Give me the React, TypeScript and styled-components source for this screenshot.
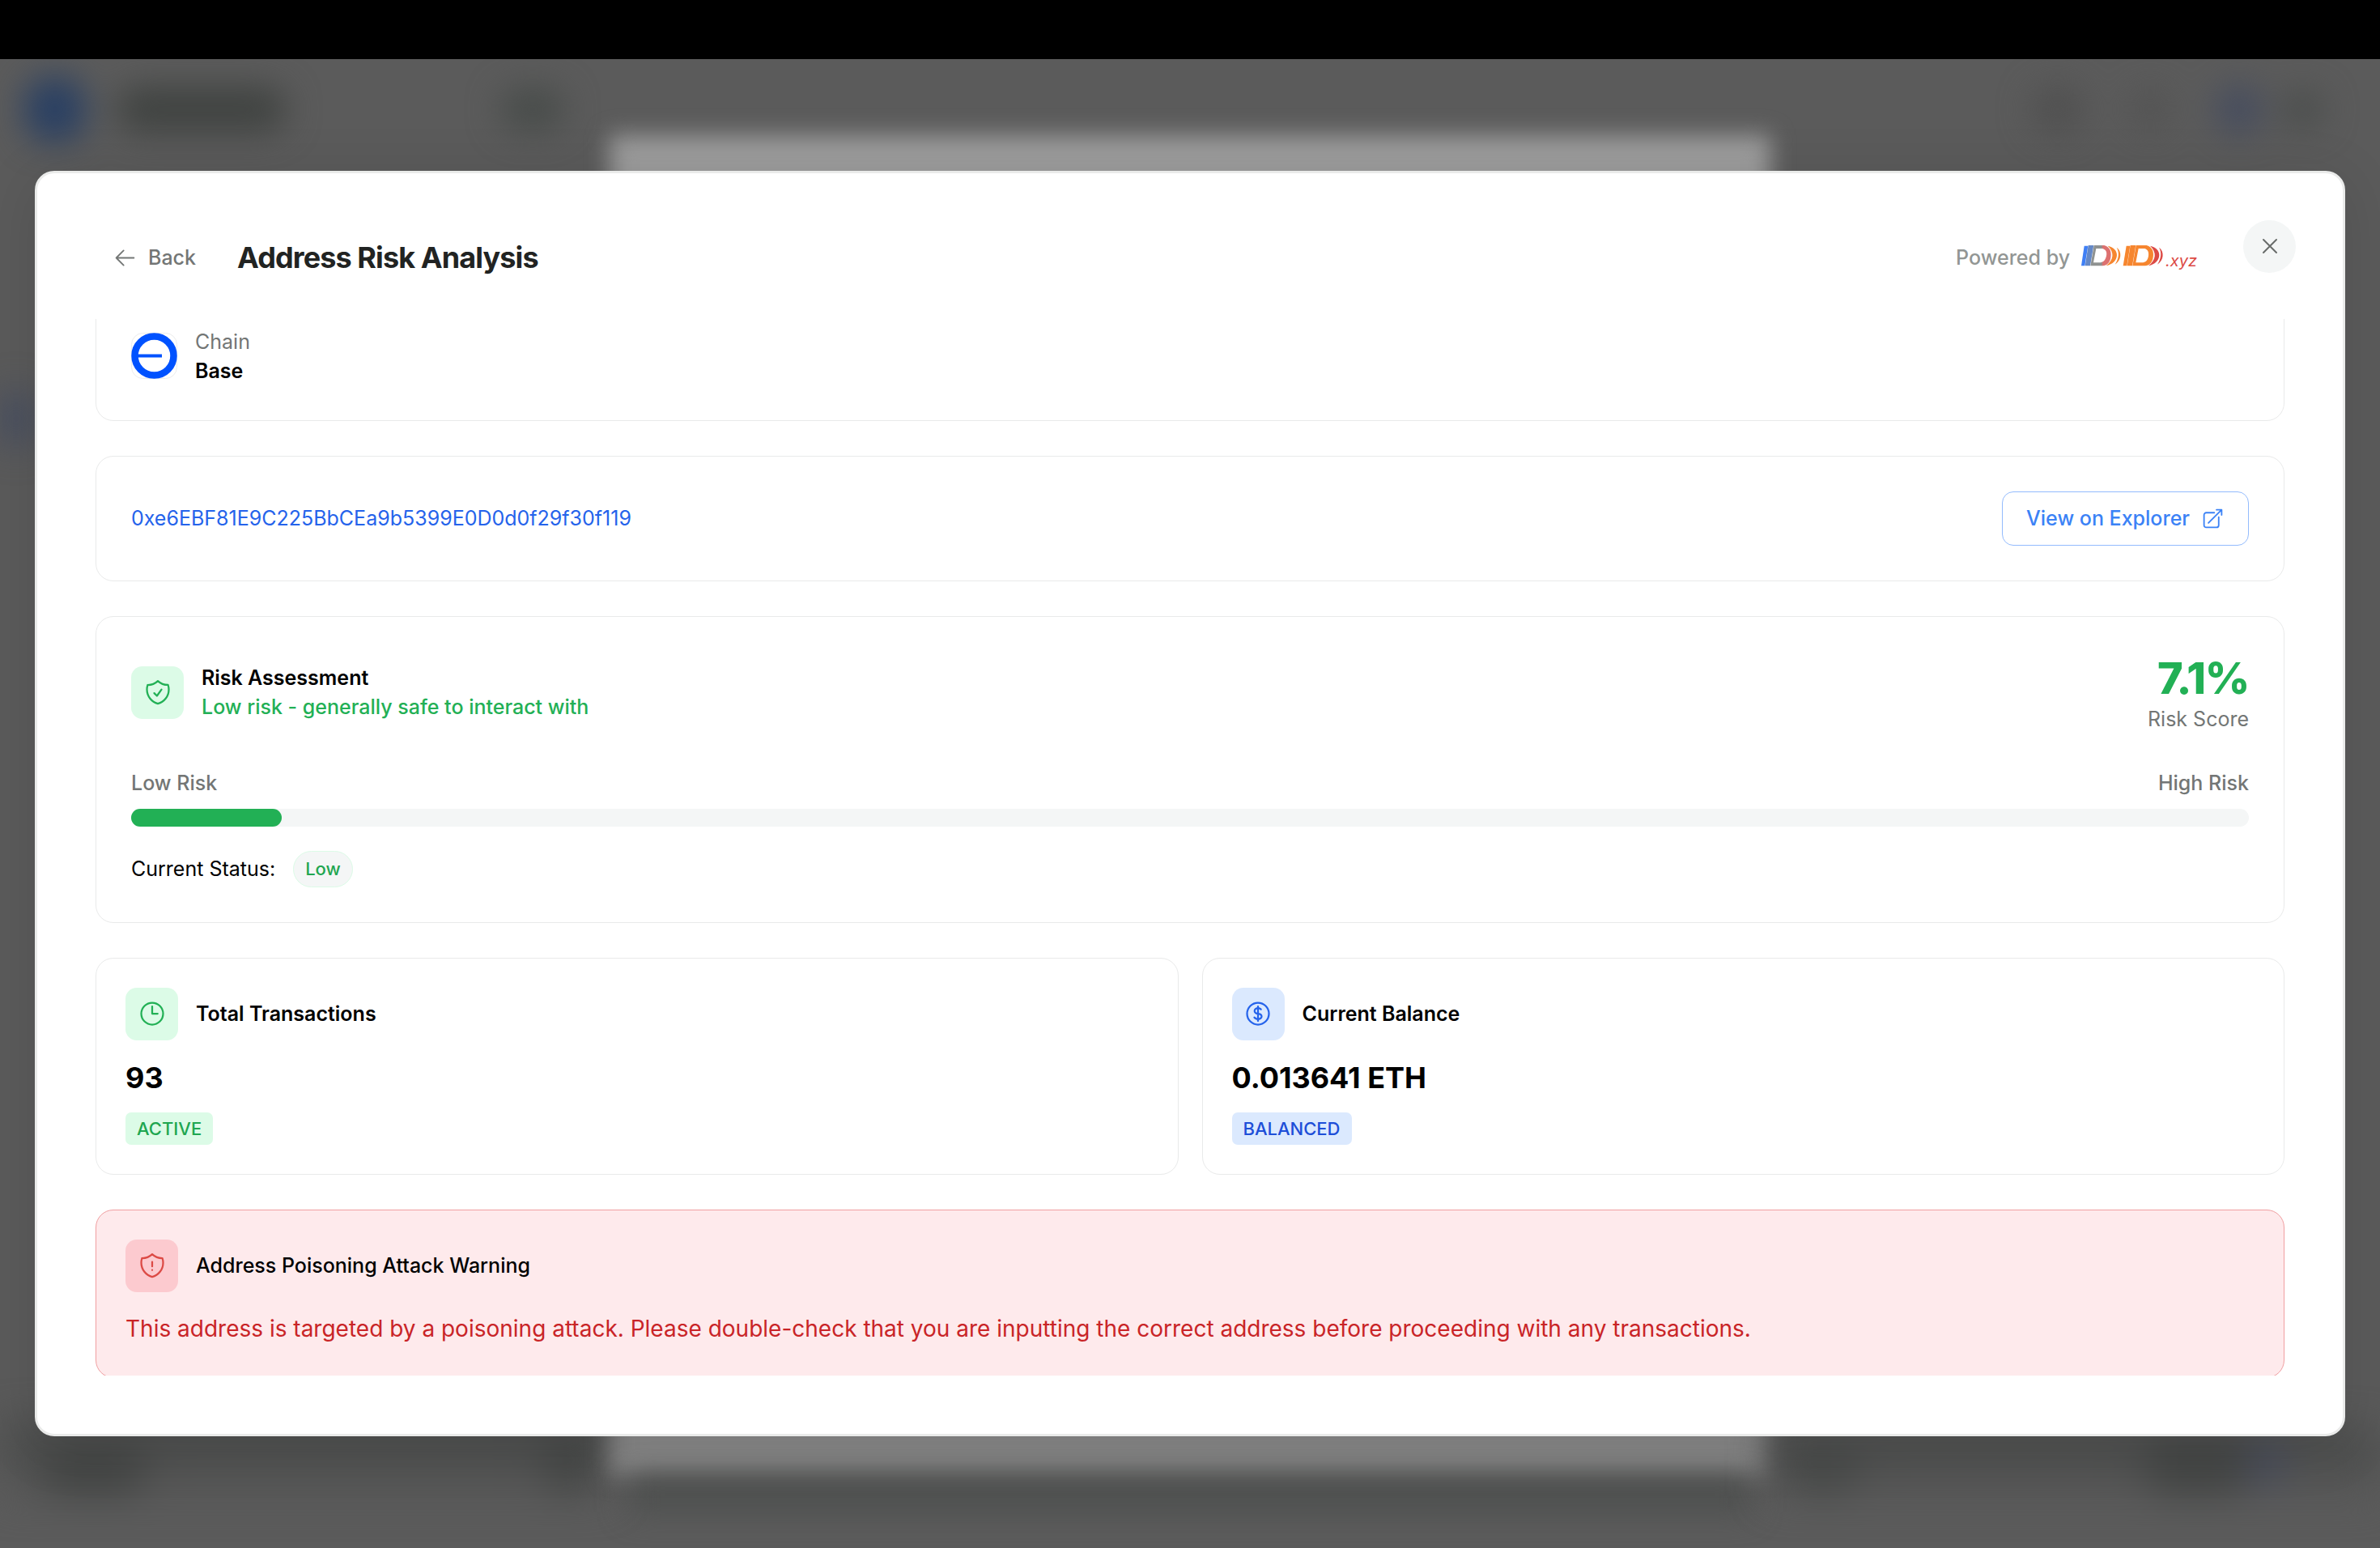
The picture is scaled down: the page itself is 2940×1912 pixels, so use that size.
import React, { useLayoutEffect, useRef } from 'react';
import styled, { createGlobalStyle } from 'styled-components';
import {
  HiOutlineArrowLeft,
  HiOutlineArrowTopRightOnSquare,
  HiOutlineClock,
  HiOutlineCurrencyDollar,
  HiOutlineShieldCheck,
  HiOutlineShieldExclamation,
  HiOutlineXMark,
} from 'react-icons/hi2';

const GlobalStyle = createGlobalStyle`
  *, *::before, *::after { box-sizing: border-box; }
  body {
    margin: 0;
    background: #000;
    font-family: Inter, "Liberation Sans", sans-serif;
    font-size: 25px;
    line-height: 36px;
    color: #000;
  }
  h1, h2, h3, p { margin: 0; font: inherit; }
  button { font: inherit; cursor: pointer; }
  a { text-decoration: none; }
`;

type Tone = 'green' | 'blue' | 'red';

const tones: Record<Tone, { tile: string; ink: string; label: string }> = {
  green: { tile: '#dcfbe7', ink: '#22b055', label: '#1ea650' },
  blue: { tile: '#dbe9fe', ink: '#2563eb', label: '#1d4ed8' },
  red: { tile: '#fccacf', ink: '#dc4a45', label: '#c92427' },
};

const Page = styled.div`
  display: flex;
  flex-direction: column;
  height: 100vh;
`;

const TopStrip = styled.div`
  flex: none;
  height: 73px;
  background: #000;
`;

const Stage = styled.div`
  position: relative;
  flex: 1;
  min-height: 0;
  display: flex;
  align-items: center;
  padding: 0 43px;
  overflow: hidden;
  background: #5b5b5b;
`;

/* The dimmed, blurred application behind the dialog */
const Behind = styled.div`
  position: absolute;
  inset: 0;
  display: flex;
  flex-direction: column;
`;

const BehindHeader = styled.div`
  display: flex;
  align-items: center;
  justify-content: space-between;
  height: 94px;
  padding: 30px 70px 0 30px;
  filter: blur(20px);
`;

const BehindGroup = styled.div<{ $gap: number }>`
  display: flex;
  align-items: center;
  gap: ${(p) => p.$gap}px;
`;

const Smudge = styled.span<{ $w: number; $h: number; $color: string }>`
  flex: none;
  width: ${(p) => p.$w}px;
  height: ${(p) => p.$h}px;
  border-radius: 32px;
  background: ${(p) => p.$color};
`;

const BehindBody = styled.div`
  flex: 1;
  display: grid;
  grid-template-columns: 1fr 1434px 1fr;
  min-height: 0;
`;

const BehindSide = styled.div`
  display: flex;
  flex-direction: column;
  justify-content: space-between;
  padding: 320px 0 64px;
  filter: blur(24px);
`;

const BehindRow = styled.div<{ $end?: boolean }>`
  display: flex;
  align-items: flex-end;
  justify-content: space-between;
  padding: ${(p) => (p.$end ? '0 120px 0 20px' : '0 20px 0 50px')};
  background: linear-gradient(#484a49, #585858);
`;

const BehindPanel = styled.div`
  display: flex;
  flex-direction: column;
  padding-bottom: 44px;
`;

const BehindSheet = styled.div`
  flex: 1;
  background: linear-gradient(#9c9c9c, #868686);
  filter: blur(14px);
`;

const BehindFooter = styled.div`
  height: 44px;
  margin: 0 24px;
  background: #4e504f;
  filter: blur(18px);
`;

const Dialog = styled.section`
  position: relative;
  flex: 1;
  min-width: 0;
  height: 85%;
  display: flex;
  flex-direction: column;
  gap: 43px;
  padding: 72px;
  border: 3px solid #eaebea;
  border-radius: 24px;
  background: #fff;
  box-shadow: 0 12px 72px rgba(0, 0, 0, 0.12);
`;

const CloseButton = styled.button`
  position: absolute;
  top: 58px;
  right: 58px;
  display: grid;
  place-items: center;
  width: 65px;
  height: 65px;
  padding: 0;
  border: 0;
  border-radius: 50%;
  background: #f4f6f6;
  color: #686c6a;
`;

const Header = styled.header`
  flex: none;
  display: flex;
  align-items: center;
  gap: 29px;
  height: 65px;
  padding-right: 108px;
`;

const BackButton = styled.button`
  display: flex;
  align-items: center;
  gap: 14px;
  padding: 14px 22px;
  border: 0;
  border-radius: 14px;
  background: none;
  color: #737675;
  font-weight: 500;
`;

const Title = styled.h1`
  flex: 1;
  font-size: 36px;
  font-weight: 700;
  line-height: 50px;
  letter-spacing: -0.025em;
  color: #212322;
`;

const Powered = styled.div`
  display: flex;
  align-items: center;
  gap: 14px;
  color: #929694;
  font-weight: 500;
`;

const Brand = styled.a`
  display: flex;
  align-items: baseline;
  padding-top: 6px;
  color: #dc4a45;
  font-size: 20px;
  font-weight: 400;
  font-style: italic;
`;

const Scroller = styled.div`
  flex: 1;
  min-height: 0;
  display: flex;
  flex-direction: column;
  gap: 43px;
  overflow-y: auto;
  scrollbar-width: none;
`;

const Card = styled.section<{ $compact?: boolean; $alert?: boolean }>`
  flex: none;
  padding: ${(p) => (p.$compact ? 36 : 43)}px;
  border: 1px solid ${(p) => (p.$alert ? '#f09fa1' : '#e9eaea')};
  border-radius: 22px;
  background: ${(p) => (p.$alert ? '#feeaec' : '#fff')};
`;

const Row = styled.div<{ $gap?: number; $between?: boolean }>`
  display: flex;
  align-items: center;
  justify-content: ${(p) => (p.$between ? 'space-between' : 'flex-start')};
  gap: ${(p) => p.$gap ?? 0}px;
`;

const Muted = styled.p<{ $medium?: boolean }>`
  color: #737675;
  font-weight: ${(p) => (p.$medium ? 500 : 400)};
`;

const Strong = styled.h2<{ $medium?: boolean }>`
  font-weight: ${(p) => (p.$medium ? 500 : 600)};
`;

const AddressLink = styled.a`
  color: #2563eb;
`;

const ExplorerButton = styled.a`
  display: flex;
  align-items: center;
  gap: 14px;
  height: 67px;
  padding: 0 29px;
  border: 1px solid #93bbfd;
  border-radius: 14px;
  color: #3b82f6;
  font-weight: 500;
`;

const Tile = styled.span<{ $tone: Tone }>`
  flex: none;
  display: grid;
  place-items: center;
  width: 65px;
  height: 65px;
  border-radius: 14px;
  background: ${(p) => tones[p.$tone].tile};
  color: ${(p) => tones[p.$tone].ink};
`;

const Verdict = styled.p`
  color: #22b055;
  font-weight: 500;
`;

const Score = styled.div`
  text-align: right;
`;

const ScoreValue = styled.p`
  font-size: 54px;
  font-weight: 800;
  line-height: 65px;
  letter-spacing: -0.025em;
  color: #22b055;
`;

const Meter = styled.div`
  padding: 43px 0 30px;
`;

const Track = styled.div`
  height: 22px;
  margin-top: 14px;
  border-radius: 11px;
  background: #f4f6f6;
`;

const Fill = styled.div`
  height: 100%;
  border-radius: 11px;
  background: #22b055;
`;

const Pill = styled.span`
  padding: 7px 14px;
  border: 1px solid #dcfbe7;
  border-radius: 23px;
  background: #f4f6f6;
  color: #22a650;
  font-size: 22px;
  font-weight: 500;
  line-height: 29px;
`;

const Stats = styled.div`
  flex: none;
  display: grid;
  grid-template-columns: 1fr 1fr;
  gap: 29px;
`;

const StatCard = styled(Card)`
  display: flex;
  flex-direction: column;
  align-items: flex-start;
`;

const StatValue = styled.p`
  padding: 21px 0 18px;
  font-size: 36px;
  font-weight: 700;
  line-height: 50px;
`;

const Badge = styled.span<{ $tone: Tone }>`
  padding: 6px 14px;
  border-radius: 7px;
  background: ${(p) => tones[p.$tone].tile};
  color: ${(p) => tones[p.$tone].label};
  font-size: 22px;
  font-weight: 500;
  line-height: 28px;
`;

const WarningText = styled.p`
  padding-top: 22px;
  color: #c92427;
  font-size: 28px;
  line-height: 47px;
`;

function BaseLogo() {
  return (
    <svg width="57" height="57" viewBox="0 0 57 57" aria-hidden="true">
      <rect x="0.5" y="0.5" width="56" height="56" rx="14" fill="#fff" stroke="#ebecec" />
      <circle cx="28.5" cy="28.5" r="24" fill="#fff" stroke="#0052ff" strokeWidth="8.5" />
      <path d="M8 28.5H38" stroke="#0052ff" strokeWidth="4" />
    </svg>
  );
}

function DdMark() {
  return (
    <svg width="104" height="26" viewBox="0 0 312 78" aria-hidden="true">
      <defs>
        <linearGradient id="dd-first" x1="0" x2="1" y1="0" y2="0">
          <stop offset="0.52" stopColor="#8f9291" />
          <stop offset="0.62" stopColor="#dd7170" />
        </linearGradient>
      </defs>
      <path d="M11 2H25L13 76H0Z" fill="#3f7ff5" />
      <path d="M26 0H46L33 76H14Z" fill="#6488c6" />
      <path fillRule="evenodd" fill="url(#dd-first)" d="M47 0H85C108 6 114 28 108 50C103 67 95 73 80 76H34ZM55 12L45 64H71C85 61 90 52 93 39C96 24 91 15 78 12Z" />
      <path d="M98 2C144 10 145 64 92 76C120 54 124 26 98 2Z" fill="#f6862f" />
      <path d="M131 8C152 22 149 56 125 71C139 48 142 28 131 8Z" fill="#f6862f" />
      <path d="M167 2H181L169 76H155Z" fill="#f6862f" />
      <path d="M182 0H202L189 76H170Z" fill="#f6862f" />
      <path fillRule="evenodd" fill="#f6862f" d="M203 0H242C265 6 271 28 265 50C260 67 252 73 237 76H190ZM212 12L202 64H229C242 61 247 52 249 39C251 24 246 15 235 12Z" />
      <path d="M255 2C301 10 302 64 249 76C277 54 281 26 255 2Z" fill="#dc4a45" />
      <path d="M288 8C309 22 306 56 282 71C296 48 299 28 288 8Z" fill="#dc4a45" />
    </svg>
  );
}

function Background() {
  return (
    <Behind aria-hidden="true">
      <BehindHeader>
        <BehindGroup $gap={38}>
          <Smudge $w={76} $h={80} $color="#2a4063" />
          <Smudge $w={210} $h={56} $color="#404341" />
          <Smudge $w={188} $h={0} $color="transparent" />
          <Smudge $w={80} $h={52} $color="#484c4a" />
        </BehindGroup>
        <BehindGroup $gap={60}>
          <Smudge $w={64} $h={58} $color="#505050" />
          <Smudge $w={44} $h={48} $color="#525252" />
          <BehindGroup $gap={24}>
            <Smudge $w={56} $h={60} $color="#454c5f" />
            <Smudge $w={52} $h={44} $color="#4a4d4c" />
          </BehindGroup>
        </BehindGroup>
      </BehindHeader>
      <BehindBody>
        <BehindSide>
          <Smudge $w={40} $h={60} $color="#3f4963" />
          <BehindRow>
            <Smudge $w={130} $h={60} $color="#434544" />
            <Smudge $w={60} $h={90} $color="#454746" />
          </BehindRow>
        </BehindSide>
        <BehindPanel>
          <BehindSheet />
          <BehindFooter />
        </BehindPanel>
        <BehindSide>
          <span />
          <BehindRow $end>
            <Smudge $w={90} $h={70} $color="#484a49" />
            <BehindGroup $gap={0}>
              <Smudge $w={130} $h={80} $color="#434544" />
              <Smudge $w={40} $h={50} $color="#454b60" />
            </BehindGroup>
          </BehindRow>
        </BehindSide>
      </BehindBody>
    </Behind>
  );
}

interface StatProps {
  tone: Tone;
  icon: React.ReactNode;
  title: string;
  value: string;
  badge: string;
}

function Stat({ tone, icon, title, value, badge }: StatProps) {
  return (
    <StatCard $compact>
      <Row $gap={22}>
        <Tile $tone={tone}>{icon}</Tile>
        <Strong>{title}</Strong>
      </Row>
      <StatValue>{value}</StatValue>
      <Badge $tone={tone}>{badge}</Badge>
    </StatCard>
  );
}

export default function App() {
  const riskScore = 7.1;
  const scroller = useRef<HTMLDivElement>(null);

  useLayoutEffect(() => {
    if (scroller.current) scroller.current.scrollTop = 34;
  }, []);

  return (
    <Page>
      <GlobalStyle />
      <TopStrip />
      <Stage>
        <Background />
        <Dialog role="dialog" aria-labelledby="dialog-title">
          <Header>
            <BackButton type="button">
              <HiOutlineArrowLeft size={29} />
              Back
            </BackButton>
            <Title id="dialog-title">Address Risk Analysis</Title>
            <Powered>
              Powered by
              <Brand href="#">
                <DdMark />
                .xyz
              </Brand>
            </Powered>
          </Header>

          <Scroller ref={scroller}>
            <Card>
              <Row $gap={22}>
                <BaseLogo />
                <div>
                  <Muted>Chain</Muted>
                  <Strong>Base</Strong>
                </div>
              </Row>
            </Card>

            <Card>
              <Row $between>
                <AddressLink href="#">0xe6EBF81E9C225BbCEa9b5399E0D0d0f29f30f119</AddressLink>
                <ExplorerButton href="#">
                  View on Explorer
                  <HiOutlineArrowTopRightOnSquare size={29} />
                </ExplorerButton>
              </Row>
            </Card>

            <Card>
              <Row $between>
                <Row $gap={22}>
                  <Tile $tone="green">
                    <HiOutlineShieldCheck size={36} />
                  </Tile>
                  <div>
                    <Strong>Risk Assessment</Strong>
                    <Verdict>Low risk - generally safe to interact with</Verdict>
                  </div>
                </Row>
                <Score>
                  <ScoreValue>{riskScore}%</ScoreValue>
                  <Muted>Risk Score</Muted>
                </Score>
              </Row>
              <Meter>
                <Row $between>
                  <Muted $medium>Low Risk</Muted>
                  <Muted $medium>High Risk</Muted>
                </Row>
                <Track
                  role="progressbar"
                  aria-label="Risk score"
                  aria-valuemin={0}
                  aria-valuemax={100}
                  aria-valuenow={riskScore}
                >
                  <Fill style={{ width: `${riskScore}%` }} />
                </Track>
              </Meter>
              <Row $gap={22}>
                <span>Current Status:</span>
                <Pill>Low</Pill>
              </Row>
            </Card>

            <Stats>
              <Stat
                tone="green"
                icon={<HiOutlineClock size={36} />}
                title="Total Transactions"
                value="93"
                badge="ACTIVE"
              />
              <Stat
                tone="blue"
                icon={<HiOutlineCurrencyDollar size={36} />}
                title="Current Balance"
                value="0.013641 ETH"
                badge="BALANCED"
              />
            </Stats>

            <Card $compact $alert>
              <Row $gap={22}>
                <Tile $tone="red">
                  <HiOutlineShieldExclamation size={36} />
                </Tile>
                <Strong $medium>Address Poisoning Attack Warning</Strong>
              </Row>
              <WarningText>
                This address is targeted by a poisoning attack. Please double-check that you are inputting the
                correct address before proceeding with any transactions.
              </WarningText>
            </Card>
          </Scroller>

          <CloseButton type="button" aria-label="Close">
            <HiOutlineXMark size={32} />
          </CloseButton>
        </Dialog>
      </Stage>
    </Page>
  );
}
